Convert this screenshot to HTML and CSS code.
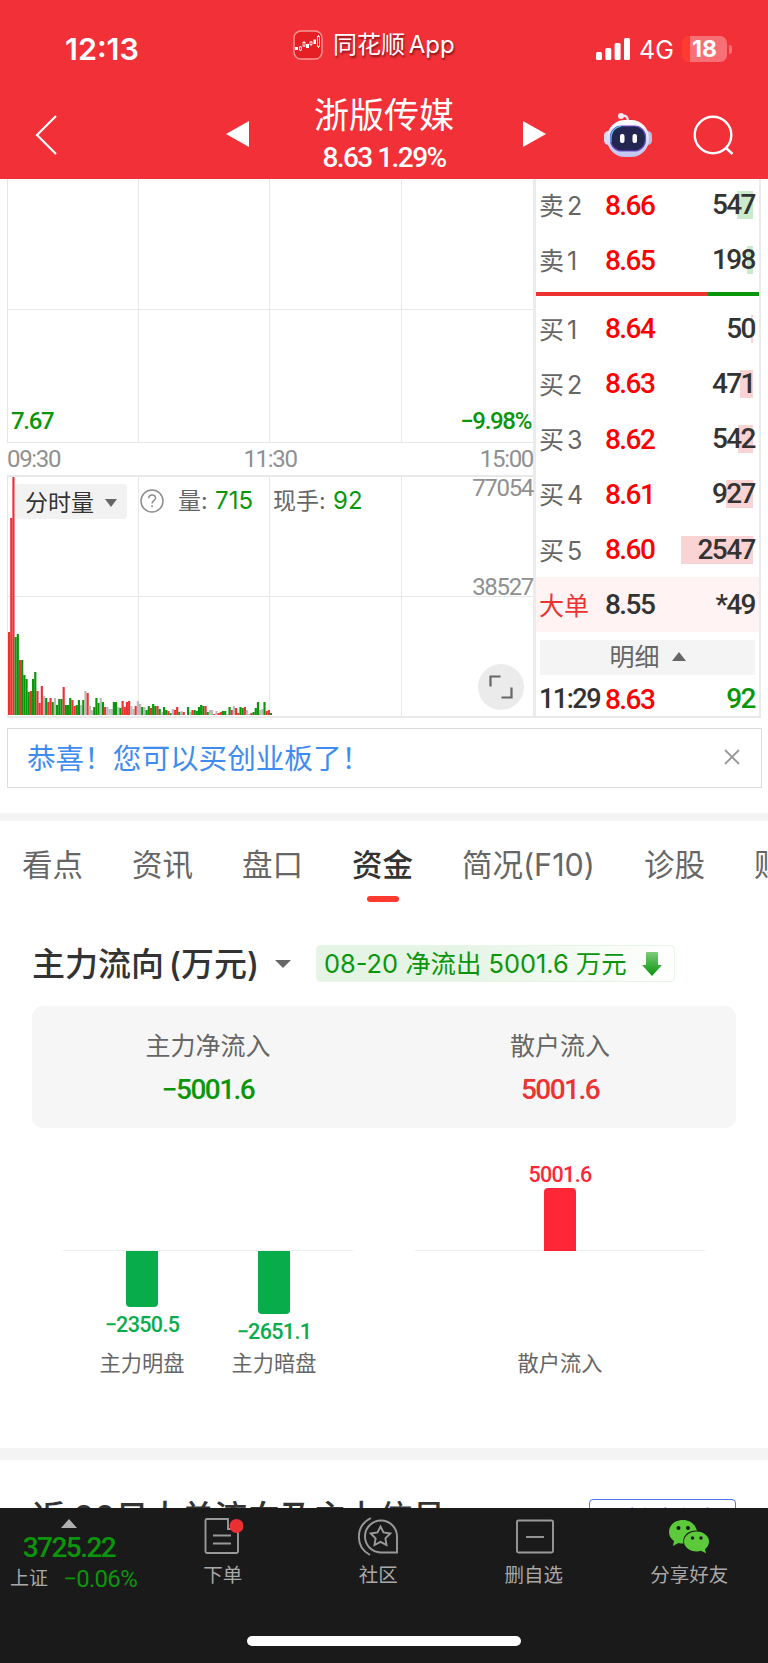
FILE: index.html
```
<!DOCTYPE html>
<html lang="zh-CN">
<head>
    <meta charset="UTF-8">
    <meta name="viewport" content="width=device-width, initial-scale=1.0">
    <title>浙版传媒</title>
    <link rel="stylesheet" href="styles.css">
</head>
<body>
    <header class="header">
        <div class="status-bar">
            <div class="clock">12:13</div>
            <div class="app-name">
                <svg width="30" height="30" viewBox="0 0 30 30">
                    <rect x="1" y="1" width="28" height="28" rx="7" fill="#e51f23" stroke="#f9989a" stroke-width="1.4"/>
                    <g fill="#fff"><rect x="2" y="17" width="3" height="3"/><rect x="13" y="14" width="3" height="4"/><rect x="20.500" y="9.500" width="2.500" height="4.500"/></g>
                    <g fill="none" stroke="#fff" stroke-width=".8"><path d="M7.500 16v5M11 11v6M18 11v5M25.500 5v13"/><g fill="#e51f23"><rect x="6.500" y="17" width="2" height="3"/><rect x="10" y="12.500" width="2" height="3.500"/><rect x="17" y="12" width="2" height="2.500"/><rect x="24.500" y="6.500" width="2" height="10"/></g></g>
                </svg>
                <span>同花顺 App</span>
            </div>
            <div class="signals">
                <svg width="35" height="23" viewBox="0 0 35 23" fill="#fff">
                    <rect x="0" y="14" width="6" height="8" rx="1.500"/>
                    <rect x="9.300" y="10" width="6" height="12" rx="1.500"/>
                    <rect x="18.600" y="5" width="6" height="17" rx="1.500"/>
                    <rect x="28" y="0" width="6" height="22" rx="1.500"/>
                </svg>
                <span class="network">4G</span>
                <span class="battery">18</span>
                <span class="battery-tip"></span>
            </div>
        </div>
        <div class="nav">
            <svg class="back" width="24" height="42" viewBox="0 0 24 42" fill="none" stroke="#fff" stroke-width="2.200"><path d="M21 2L2 21l19 19"/></svg>
            <div class="stock">
                <svg width="24" height="26" viewBox="0 0 24 26" fill="#fff"><path d="M0 13L23 0v26z"/></svg>
                <div class="stock-title">
                    <h1>浙版传媒</h1>
                    <div class="num">8.63 1.29%</div>
                </div>
                <svg width="24" height="26" viewBox="0 0 24 26" fill="#fff"><path d="M24 13L1 0v26z"/></svg>
            </div>
            <div class="nav-tools">
                <svg width="50" height="46" viewBox="0 0 50 46">
                    <defs><linearGradient id="face" x1="0" y1="0" x2="0" y2="1"><stop offset="0" stop-color="#fff"/><stop offset="1" stop-color="#bfc2ee"/></linearGradient></defs>
                    <path d="M18 4q7-2 7 6" fill="none" stroke="#f0eef8" stroke-width="2.200"/>
                    <circle cx="18" cy="4" r="3" fill="#f6e8f2"/>
                    <rect x="1" y="19" width="9" height="14" rx="4.500" fill="#d9d7f2"/>
                    <rect x="40" y="19" width="9" height="14" rx="4.500" fill="#c3bde8"/>
                    <rect x="4" y="8" width="42" height="37" rx="18" fill="url(#face)"/>
                    <rect x="7.500" y="14" width="35" height="25" rx="11" fill="#222650" stroke="#6a4fd0" stroke-width="1.200"/>
                    <path d="M8 30q-1-14 10-15.500" fill="none" stroke="#55c5e8" stroke-width="1.200"/>
                    <rect x="17" y="22" width="4.500" height="9" rx="2" fill="#fff"/>
                    <rect x="29.500" y="22" width="4.500" height="9" rx="2" fill="#fff"/>
                </svg>
                <svg width="42" height="42" viewBox="0 0 42 42" fill="none" stroke="#fff" stroke-width="2.400"><circle cx="20" cy="20" r="18.300"/><path d="M32.500 32.500l7 6.500"/></svg>
            </div>
        </div>
    </header>

    <main class="content">
        <section class="quote">
            <div class="charts">
                <div class="price-chart grid-lines num">
                    <span>7.67</span>
                    <span>−9.98%</span>
                </div>
                <div class="times num">
                    <span>09:30</span>
                    <span>11:30</span>
                    <span>15:00</span>
                </div>
                <div class="volume-chart grid-lines">
                    <svg class="volume-bars" id="volumeBars" width="264" height="240"></svg>
                    <div class="volume-info">
                        <span class="select">分时量 <i class="caret"></i></span>
                        <svg width="24" height="24" viewBox="0 0 24 24"><circle cx="12" cy="12" r="11" fill="none" stroke="#8d8d8d" stroke-width="1.500"/><path d="M8.700 9.300c.2-4.600 6.800-4.300 6.800-.4 0 2.600-3.400 2.800-3.400 5.600M12.100 16.300v1.900" fill="none" stroke="#8d8d8d" stroke-width="1.500"/></svg>
                        <span class="volume-total">量: <b>715</b></span>
                        <span class="volume-now">现手: <b>92</b></span>
                    </div>
                    <span class="scale scale-top num">77054</span>
                    <span class="scale scale-mid num">38527</span>
                    <button class="expand" aria-label="全屏"><svg width="24" height="24" viewBox="0 0 24 24" fill="none" stroke="#666" stroke-width="2.200"><path d="M1.500 11.500v-10h10M22.500 12.500v10h-10"/></svg></button>
                </div>
            </div>

            <div class="order-book">
                <div class="order"><span>卖 2</span><b class="num">8.66</b><em class="num sell" style="--depth: 16px">547</em></div>
                <div class="order"><span>卖 1</span><b class="num">8.65</b><em class="num sell" style="--depth: 6px">198</em></div>
                <div class="ratio"></div>
                <div class="order"><span>买 1</span><b class="num">8.64</b><em class="num buy" style="--depth: 2px">50</em></div>
                <div class="order"><span>买 2</span><b class="num">8.63</b><em class="num buy" style="--depth: 13px">471</em></div>
                <div class="order"><span>买 3</span><b class="num">8.62</b><em class="num buy" style="--depth: 15px">542</em></div>
                <div class="order"><span>买 4</span><b class="num">8.61</b><em class="num buy" style="--depth: 27px">927</em></div>
                <div class="order"><span>买 5</span><b class="num">8.60</b><em class="num buy" style="--depth: 72px">2547</em></div>
                <div class="order big-order"><span>大单</span><b class="num">8.55</b><em class="num">*49</em></div>
                <div class="detail-toggle">明细 <i class="caret up"></i></div>
                <div class="order trade"><span class="num">11:29</span><b class="num">8.63</b><em class="num green">92</em></div>
            </div>
        </section>

        <div class="notice">
            <span>恭喜！您可以买创业板了！</span>
            <svg width="16" height="16" viewBox="0 0 16 16" stroke="#999" stroke-width="1.800"><path d="M1 1l14 14M15 1L1 15"/></svg>
        </div>

        <nav class="tabs">
            <a>看点</a>
            <a>资讯</a>
            <a>盘口</a>
            <a class="active">资金</a>
            <a>简况(F10)</a>
            <a>诊股</a>
            <a>财务</a>
        </nav>

        <section class="funds">
            <div class="funds-head">
                <h2>主力流向 (万元)</h2>
                <i class="caret"></i>
                <div class="flow-tag">
                    <span>08-20 净流出 5001.6 万元</span>
                    <svg width="20" height="24" viewBox="0 0 20 24"><defs><linearGradient id="down" x1="0" y1="0" x2="0" y2="1"><stop offset="0" stop-color="#7ccc7c"/><stop offset="1" stop-color="#079607"/></linearGradient></defs><path d="M5 0h10q1 0 1 1v12h4L10 24 0 13h4V1q0-1 1-1z" fill="url(#down)"/></svg>
                </div>
            </div>
            <div class="summary">
                <div><span>主力净流入</span><b class="num green">−5001.6</b></div>
                <div><span>散户流入</span><b class="num red">5001.6</b></div>
            </div>
            <div class="flow-charts">
                <div class="flow-chart">
                    <div class="flow-item">
                        <div class="above"></div>
                        <div class="below"><i class="bar" style="height: 56px"></i><span class="num">−2350.5</span></div>
                        <label>主力明盘</label>
                    </div>
                    <div class="flow-item">
                        <div class="above"></div>
                        <div class="below"><i class="bar" style="height: 63px"></i><span class="num">−2651.1</span></div>
                        <label>主力暗盘</label>
                    </div>
                </div>
                <div class="flow-chart">
                    <div class="flow-item">
                        <div class="above"><span class="num">5001.6</span><i class="bar" style="height: 63px"></i></div>
                        <div class="below"></div>
                        <label>散户流入</label>
                    </div>
                </div>
            </div>
        </section>

        <section class="recent">
            <h2>近 20日大单流向及主力信号</h2>
            <a class="link-button">一键追主力</a>
        </section>
    </main>

    <footer class="footer">
        <div class="index">
            <i class="caret up"></i>
            <div class="index-value num">3725.22</div>
            <div class="index-change"><span>上证</span><b class="num">−0.06%</b></div>
        </div>
        <div class="action">
            <svg width="40" height="40" viewBox="0 0 40 40" fill="none" stroke="#999" stroke-width="1.900">
                <path d="M25 2H4q-1.500 0-1.500 1.500v31Q2.500 36 4 36h29.500q1.500 0 1.500-1.500V12H25z"/><path d="M10 18.500h18M10 26.500h18"/>
                <circle cx="33.500" cy="9" r="7" fill="#eb2f32" stroke="none"/>
            </svg>
            <span>下单</span>
        </div>
        <div class="action">
            <svg width="42" height="40" viewBox="0 0 42 40" fill="none" stroke="#999" stroke-width="1.900">
                <path d="M14 1C-2 9-2 30 13 38"/><path d="M40 35.500H23.500A16 16 0 1 1 40 19.500z"/>
                <path d="M23.500 9.500l3 6 6.800 1-4.900 4.800 1.100 6.700-6-3.200-6 3.200 1.100-6.700-4.900-4.800 6.800-1z"/>
            </svg>
            <span>社区</span>
        </div>
        <div class="action">
            <svg width="40" height="40" viewBox="0 0 40 40" fill="none" stroke="#999" stroke-width="1.900"><rect x="3" y="3.500" width="36" height="32" rx="1.500"/><path d="M12 20h18"/></svg>
            <span>删自选</span>
        </div>
        <div class="action">
            <svg width="42" height="40" viewBox="0 0 42 40">
                <path d="M15 3C7 3 1 8 1 15c0 4 2 7 5 9l-1 5 5.500-3q2.500.7 5 .5C14 18 21 13 29 13.500 27 7 22 3 15 3z" fill="#5cc93b"/>
                <path d="M28.500 14.500c-7 0-12.500 4.500-12.500 10s5.500 10 12.500 10q2.500 0 4.500-.8l5 2.500-1-4c2.500-2 4-4.500 4-7.700 0-5.500-5.500-10-12.500-10z" fill="#5cc93b"/>
                <g fill="#1a1a1a"><circle cx="10.500" cy="11" r="2"/><circle cx="20" cy="11" r="2"/><circle cx="24.500" cy="21" r="1.700"/><circle cx="33" cy="21" r="1.700"/></g>
            </svg>
            <span>分享好友</span>
        </div>
        <div class="home-indicator"></div>
    </footer>

    <script>
        // r 上涨, g 下跌, n 平盘
        const volumes = 'r83 r197 r238 g78 g81 r55 g55 g40 g36 g23 r24 g36 g43 r24 r12 r29 n19 g17 r13 r17 g13 n17 g10 g16 g16 r28 g10 g10 g17 r15 r9 g10 g15 n10 g15 n24 r22 n9 n5 g8 g17 g12 n17 g13 r8 n8 n6 n6 g13 g13 n8 g7 r14 r8 r13 r14 n9 n6 r9 n14 n11 g8 n8 g5 g9 r7 g11 g9 r9 g6 n3 g8 g5 r4 g2 n6 r5 r8 g3 n4 r3 n0 g8 n3 r5 g5 g4 g8 g10 g9 r9 g3 n5 n5 r1 n4 r2 r3 g4 g4 n1 g8 r5 n9 r7 r2 g8 g7 r8 n5 n1 r2 g3 g7 g13 n5 n6 g13 r4 r5 g2';
        const colors = { r: '#eb3333', g: '#0a960a', n: '#bababa' };
        const step = 2.183;

        document.getElementById('volumeBars').innerHTML = volumes.split(' ').map((v, i) => {
            const h = Number(v.slice(1));
            return `<rect x="${i * step}" y="${238 - h}" width="${step}" height="${h}" fill="${colors[v[0]]}"/>`;
        }).join('');
    </script>
</body>
</html>
```
FILE: styles.css
```
* {
    box-sizing: border-box;
}
body {
    display: flex;
    flex-direction: column;
    width: 768px;
    height: 1663px;
    margin: 0;
    overflow: hidden;
    background-color: #fff;
    color: #333;
    font-family: Inter, "Noto Sans CJK SC", sans-serif;
}
h1, h2 {
    margin: 0;
}
svg {
    display: block;
    flex: none;
}
em, i {
    font-style: normal;
}
.num {
    font-family: Roboto, sans-serif;
    font-weight: 500;
    letter-spacing: -0.055em;
}
.green {
    color: #0a960a;
}
.red {
    color: #eb3333;
}
.caret {
    display: inline-block;
    border: 6px solid transparent;
    border-top: 8px solid #666;
    border-bottom: 0;
}
.caret.up {
    border-top: 0;
    border-bottom: 9px solid #666;
}

/* header */
.header {
    flex: none;
    height: 179px;
    background-color: #f23038;
    color: #fff;
}
.status-bar {
    display: grid;
    grid-template-columns: 293px 303px 1fr;
    height: 90px;
    padding-top: 26px;
}
.clock {
    padding-left: 65px;
    font-size: 30.500px;
    font-weight: 600;
    line-height: 46px;
}
.app-name {
    display: flex;
    gap: 10px;
    padding-top: 4px;
    font-size: 24px;
    line-height: 30px;
    text-shadow: 1px 2px 2px rgba(60, 0, 0, 0.6);
    white-space: nowrap;
    word-spacing: -3px;
}
.signals {
    display: flex;
    align-items: center;
    height: 46px;
}
.network {
    margin-left: 8px;
    width: 43px;
    font-size: 25px;
    line-height: 30px;
    padding-top: 2px;
}
.battery {
    width: 45px;
    height: 26px;
    border-radius: 7px;
    background: linear-gradient(90deg, #ff3b30 8px, #f77076 8px);
    font-size: 23px;
    font-weight: 700;
    line-height: 26px;
    text-align: center;
}
.battery-tip {
    width: 3px;
    height: 9px;
    margin-left: 2px;
    border-radius: 0 3px 3px 0;
    background-color: #f77076;
}
.nav {
    display: grid;
    grid-template-columns: 226px 320px 1fr;
    height: 89px;
}
.back {
    margin: 24px 0 0 35px;
}
.stock {
    display: flex;
    justify-content: space-between;
}
.stock > svg {
    margin-top: 31px;
}
.stock-title {
    margin-right: 4px;
    text-align: center;
}
.stock-title h1 {
    font-size: 35px;
    font-weight: 400;
    line-height: 50px;
}
.stock-title .num {
    font-size: 28px;
    line-height: 35px;
}
.nav-tools {
    display: flex;
    gap: 40px;
    padding: 22px 0 0 57px;
}
.nav-tools svg:last-child {
    margin-top: 3px;
}

/* quote */
.content {
    flex: 1;
    min-height: 0;
    overflow: hidden;
}
.quote {
    display: grid;
    grid-template-columns: 529px 225px;
    width: 754px;
    height: 539px;
    margin-left: 7px;
    border-bottom: 2px solid #e9e9e9;
}
.charts {
    border-right: 3px solid #ebebeb;
}
.grid-lines {
    border: 1px solid #e6e6e6;
    background:
        linear-gradient(#e8e8e8, #e8e8e8) 130px 0 / 1px 100% no-repeat,
        linear-gradient(#e8e8e8, #e8e8e8) 261px 0 / 1px 100% no-repeat,
        linear-gradient(#e8e8e8, #e8e8e8) 393px 0 / 1px 100% no-repeat,
        linear-gradient(#e8e8e8, #e8e8e8) 0 50% / 100% 1px no-repeat;
}
.price-chart {
    display: flex;
    justify-content: space-between;
    align-items: flex-end;
    height: 264px;
    padding: 0 2px 6px 3px;
    border-top: 0;
    border-right: 0;
    background-position: 130px 0, 261px 0, 393px 0, 0 130px;
    color: #0a960a;
    font-size: 24px;
    line-height: 30px;
}
.times {
    display: flex;
    justify-content: space-between;
    height: 32px;
    color: #909090;
    font-size: 24px;
    font-weight: 400;
    line-height: 32px;
}
.volume-chart {
    position: relative;
    height: 241px;
    border-top: 2px solid #e9e9e9;
    border-right: 0;
    border-bottom: 0;
}
.volume-bars {
    position: absolute;
    left: 0;
    top: 0;
}
.volume-info {
    position: relative;
    display: flex;
    align-items: center;
    height: 42px;
    padding: 6px 0 0 7px;
    color: #666;
    font-size: 23px;
    line-height: 38px;
}
.volume-info b {
    margin-left: 1px;
    color: #0a960a;
    font-size: 24px;
    font-weight: 400;
}
.select {
    width: 112px;
    height: 35px;
    margin-right: 13px;
    padding-left: 10px;
    border-radius: 4px;
    background-color: #f2f2f2;
    color: #333;
}
.select .caret {
    margin: 0 0 4px 5px;
}
.volume-total {
    width: 95px;
    margin-left: 14px;
}
.scale {
    position: absolute;
    right: 0;
    color: #909090;
    font-size: 24px;
    font-weight: 400;
    line-height: 24px;
}
.scale-top {
    top: -1px;
}
.scale-mid {
    top: 98px;
}
.expand {
    position: absolute;
    right: 9px;
    bottom: 6px;
    display: flex;
    align-items: center;
    justify-content: center;
    width: 46px;
    height: 46px;
    padding: 0;
    border: 0;
    border-radius: 50%;
    background-color: #ebebeb;
}
.order-book {
    border-right: 2px solid #ebebeb;
}
.order {
    display: grid;
    grid-template-columns: 66px 60px 1fr;
    align-items: center;
    height: 55.25px;
    padding: 1px 4px 0 3px;
    font-size: 28px;
}
.order:first-child {
    margin-top: -2px;
}
.order > span {
    padding-bottom: 2px;
    color: #666;
    font-size: 25px;
    white-space: nowrap;
    word-spacing: -4px;
}
.order b {
    color: #f00;
}
.order em {
    color: #333;
    line-height: 28px;
    text-align: right;
}
.sell, .buy {
    background: linear-gradient(#fad3d5, #fad3d5) calc(100% - 2px) 0 / var(--depth) 100% no-repeat;
}
.sell {
    background-image: linear-gradient(#cbeacb, #cbeacb);
}
.ratio {
    height: 4px;
    margin: 4px 0 5px;
    background: linear-gradient(90deg, #eb3333 77%, #0a960a 77%);
}
.big-order {
    background-color: #fff3f3;
}
.big-order b {
    color: #333;
}
.big-order > span {
    color: #eb3333;
}
.detail-toggle {
    height: 35px;
    margin: 8px 4px 0 4px;
    background-color: #f4f4f4;
    color: #666;
    font-size: 25px;
    line-height: 35px;
    text-align: center;
}
.detail-toggle .caret {
    margin: 0 0 5px 5px;
    border-right-width: 7px;
    border-left-width: 7px;
}
.order.trade {
    height: 41px;
    padding-top: 7px;
}
.trade > span {
    padding: 0;
    color: #333;
    font-size: 27px;
}
.trade .green {
    color: #0a960a;
}

/* notice and tabs */
.notice {
    display: flex;
    align-items: center;
    justify-content: space-between;
    width: 755px;
    height: 60px;
    margin: 10px 0 25px 7px;
    padding: 0 21px 2px 19px;
    border: 1px solid #dcdcdc;
    color: #3f8cf0;
    font-size: 28.6px;
}
.notice span {
    padding-bottom: 2px;
}
.tabs {
    display: flex;
    gap: 49px;
    height: 105px;
    padding: 18px 0 0 22px;
    border-top: 8px solid #f4f4f4;
    color: #666;
    font-size: 30.500px;
    line-height: 52px;
    white-space: nowrap;
}
.tabs a {
    flex: none;
}
.tabs .active {
    color: #333;
    font-weight: 500;
}
.tabs .active::after {
    content: "";
    display: block;
    width: 32px;
    height: 6px;
    margin: 5px auto 0;
    border-radius: 3px;
    background-color: #ff3b30;
}

/* funds */
.funds {
    padding: 27px 32px 0;
}
.funds-head {
    display: flex;
    align-items: center;
    height: 37px;
}
.funds h2, .recent h2 {
    font-size: 33px;
    font-weight: 500;
    white-space: nowrap;
}
.funds h2 {
    width: 228px;
    padding-bottom: 4px;
    word-spacing: -4px;
}
.funds-head .caret {
    margin-left: 15px;
    border-width: 8px 8px 0;
}
.flow-tag {
    display: flex;
    align-items: center;
    justify-content: space-between;
    width: 359px;
    height: 37px;
    margin-left: 25px;
    padding: 0 12px 0 7px;
    border: 1px solid #e8f6e8;
    border-radius: 4px;
    background: linear-gradient(90deg, #e5f4e5 40%, #fff);
    color: #0a960a;
    font-size: 25.400px;
    white-space: nowrap;
}
.flow-tag span {
    padding-bottom: 4px;
}
.summary {
    display: grid;
    grid-template-columns: 1fr 1fr;
    height: 122px;
    margin-top: 24px;
    padding-top: 21px;
    border-radius: 11px;
    background-color: #f6f6f6;
    color: #666;
    font-size: 25px;
    line-height: 38px;
    text-align: center;
}
.summary b {
    display: block;
    margin-top: 6px;
    font-size: 28px;
}
.flow-charts {
    display: grid;
    grid-template-columns: 1fr 1fr;
    height: 319px;
    margin-top: 1px;
}
.flow-chart {
    display: flex;
    justify-content: center;
    margin: 0 31px;
    background: linear-gradient(#eee, #eee) 0 121px / 100% 1px no-repeat;
}
.flow-item {
    width: 132px;
    text-align: center;
}
.above, .below {
    display: flex;
    flex-direction: column;
    align-items: center;
    color: #09ac4b;
    font-size: 21.500px;
    line-height: 26px;
}
.above {
    justify-content: flex-end;
    height: 122px;
    color: #ff2638;
}
.below {
    height: 96px;
}
.bar {
    flex: none;
    width: 32px;
    border-radius: 0 0 4px 4px;
    background-color: #09ac4b;
}
.above .bar {
    border-radius: 4px 4px 0 0;
    background-color: #ff2638;
}
.flow-item .num {
    letter-spacing: -0.03em;
}
.below .num {
    margin-top: 5px;
}
.flow-item label {
    color: #666;
    font-size: 21.200px;
    line-height: 32px;
}
.recent {
    display: flex;
    justify-content: space-between;
    padding: 39px 32px 0;
    border-top: 12px solid #f4f4f4;
}
.recent h2 {
    margin-top: 3px;
    line-height: 30px;
}
.link-button {
    width: 147px;
    height: 36px;
    border: 1px solid #4a78f5;
    border-radius: 4px;
    color: #4a78f5;
    font-size: 23px;
    line-height: 38px;
    text-align: center;
}

/* footer */
.footer {
    position: relative;
    flex: none;
    display: flex;
    height: 155px;
    padding-top: 9px;
    background-color: #1a1a1a;
    color: #a8a8a8;
    font-size: 19.500px;
}
.index {
    width: 145px;
    padding-right: 7px;
    text-align: center;
}
.index .caret {
    display: block;
    width: 0;
    margin: 2px auto 0;
    border-width: 0 8px 9px;
    border-bottom-color: #b0b0b0;
}
.index-value {
    margin-top: 5px;
    color: #0a960a;
    font-size: 28px;
    line-height: 30px;
}
.index-change {
    display: flex;
    align-items: center;
    justify-content: space-between;
    padding: 1px 1px 0 10px;
    font-size: 19px;
    line-height: 30px;
}
.index-change b {
    color: #0a960a;
    font-size: 24px;
    font-weight: 400;
    letter-spacing: -0.03em;
}
.action {
    display: flex;
    flex-direction: column;
    align-items: center;
    width: 155.500px;
}
.action span {
    margin-top: 3px;
    line-height: 30px;
}
.home-indicator {
    position: absolute;
    left: 247px;
    bottom: 17px;
    width: 274px;
    height: 10px;
    border-radius: 5px;
    background-color: #fff;
}
```
